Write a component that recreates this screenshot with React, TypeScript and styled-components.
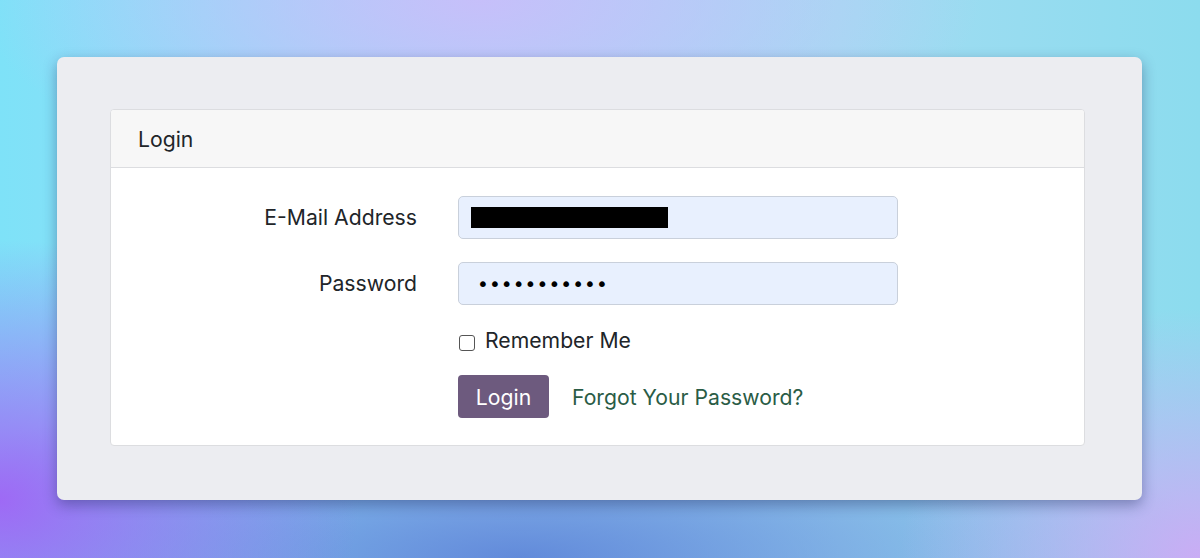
import React from "react";
import styled, { createGlobalStyle } from "styled-components";

const Global = createGlobalStyle`
  html, body { margin: 0; padding: 0; }
  body {
    width: 1200px;
    height: 558px;
    overflow: hidden;
    font-family: Inter, "Noto Sans", sans-serif;
  }
`;

const Backdrop = styled.div`
  width: 1200px;
  height: 558px;
  box-sizing: border-box;
  padding: 57px 58px 58px 57px;
  background:
    radial-gradient(ellipse 360px 260px at 0px 500px, rgba(160, 100, 245, 0.95), rgba(160, 100, 245, 0) 100%),
    radial-gradient(ellipse 500px 200px at 480px 0px, rgba(200, 190, 250, 0.95), rgba(200, 190, 250, 0) 100%),
    radial-gradient(ellipse 300px 250px at 1200px 558px, rgba(205, 170, 245, 0.95), rgba(205, 170, 245, 0) 100%),
    radial-gradient(ellipse 700px 180px at 520px 558px, rgba(90, 130, 215, 0.9), rgba(90, 130, 215, 0) 100%),
    linear-gradient(90deg, #7ee2f8 0%, #a6d6f8 40%, #a2dcf2 70%, #8cdcee 100%);
`;

const Window = styled.div`
  height: 443px;
  box-sizing: border-box;
  background: #ecedf1;
  border-radius: 7px;
  box-shadow: 0 5px 14px rgba(30, 40, 90, 0.4);
  padding: 52px 57px 55px 53px;
`;

const Card = styled.div`
  background: #ffffff;
  border: 1px solid #dcdde0;
  border-radius: 4px;
  overflow: hidden;
`;

const CardHeader = styled.div`
  background: #f7f7f7;
  border-bottom: 1px solid #dcdde0;
  height: 57px;
  display: flex;
  align-items: center;
  padding-left: 27px;
  font-size: 21.2px;
  color: #212529;
`;

const CardBody = styled.form`
  display: grid;
  grid-template-columns: 306px 440px;
  column-gap: 41px;
  row-gap: 23px;
  padding: 28px 0 27px 0;
  align-items: center;
`;

const Label = styled.label`
  text-align: right;
  font-size: 21.2px;
  color: #212529;
  margin-top: -2px;
`;

const Field = styled.div`
  height: 43px;
  box-sizing: border-box;
  background: #e8f0fe;
  border: 1px solid #c9d0db;
  border-radius: 5px;
  display: flex;
  align-items: center;
  padding-left: 12px;
`;

const Redacted = styled.div`
  width: 197px;
  height: 21px;
  background: #000;
`;

const Dots = styled.div`
  font-size: 20px;
  letter-spacing: 0.1px;
  color: #000;
  padding-left: 6px;
  font-family: "DejaVu Sans", sans-serif;
  line-height: 1;
`;

const Spacer = styled.div``;

const CheckRow = styled.div`
  display: flex;
  align-items: center;
  gap: 10px;
  height: 24px;
  line-height: 24px;
  font-size: 21.2px;
  color: #212529;
`;

const Box = styled.span`
  width: 16px;
  height: 16px;
  box-sizing: border-box;
  border: 1px solid #555;
  border-radius: 3px;
  background: #fff;
  margin-left: 1px;
  margin-top: 5px;
`;

const Actions = styled.div`
  display: flex;
  align-items: center;
  gap: 23px;
`;

const Button = styled.button`
  height: 43px;
  width: 91px;
  border: none;
  border-radius: 4px;
  background: #6d5a7e;
  color: #fff;
  font-family: inherit;
  font-size: 21.2px;
  padding: 0;
`;

const LinkText = styled.a`
  color: #2a5c46;
  font-size: 21.2px;
  text-decoration: none;
`;

export default function App() {
  return (
    <>
      <Global />
      <Backdrop>
        <Window>
          <Card>
            <CardHeader>Login</CardHeader>
            <CardBody>
              <Label>E-Mail Address</Label>
              <Field>
                <Redacted />
              </Field>
              <Label>Password</Label>
              <Field>
                <Dots>•••••••••••</Dots>
              </Field>
              <Spacer />
              <CheckRow>
                <Box />
                Remember Me
              </CheckRow>
              <Spacer />
              <Actions>
                <Button type="button">Login</Button>
                <LinkText>Forgot Your Password?</LinkText>
              </Actions>
            </CardBody>
          </Card>
        </Window>
      </Backdrop>
    </>
  );
}
